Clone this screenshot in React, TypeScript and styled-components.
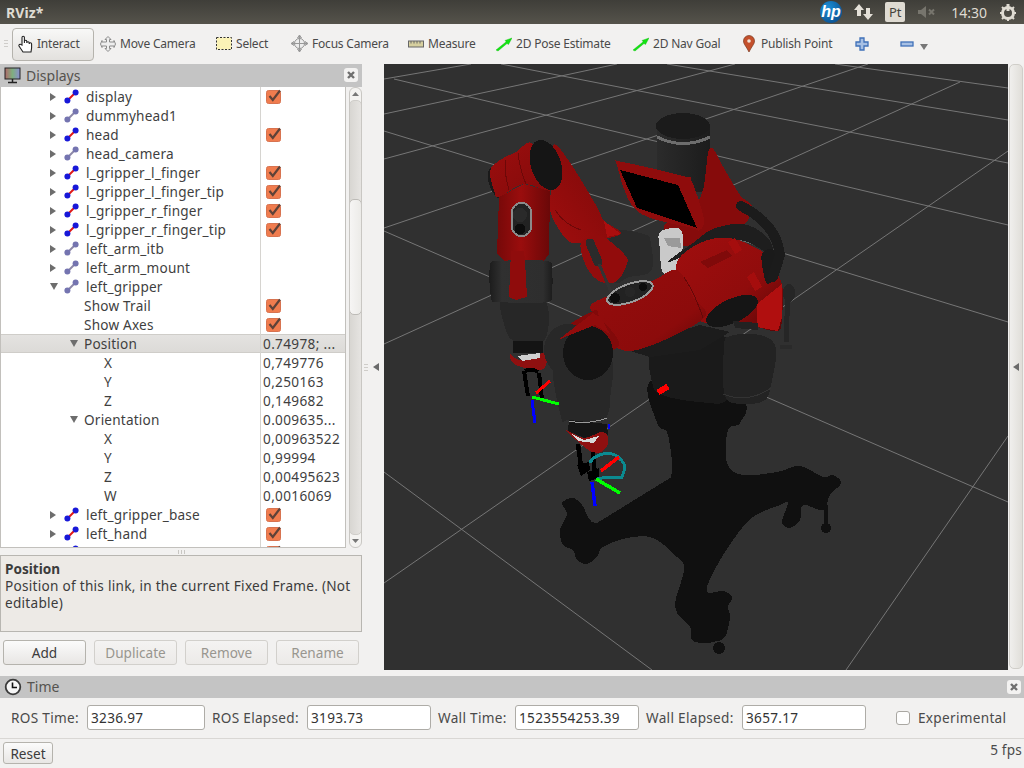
import React from "react";
import styled, { createGlobalStyle } from "styled-components";

const Global = createGlobalStyle`
  html, body { margin: 0; padding: 0; background: #f2f1f0; }
  body { font-family: "Noto Sans", "Open Sans", sans-serif; font-size: 13.5px; color: #3c3c3c; }
`;
const Root = styled.div`
  width: 1024px; height: 768px; overflow: hidden; display: flex; flex-direction: column; background: #f2f1f0;
`;
const TopBar = styled.div`
  height: 24px; flex: none; display: flex; align-items: center; padding: 0 8px 0 6px; box-sizing: border-box;
  background: linear-gradient(#3f3e39, #55534b);
  color: #dfdbd2;
`;
const Title = styled.div`font-weight: 700; font-size: 14px; letter-spacing: .1px; margin-right: auto;`;
const Tray = styled.div`display: flex; align-items: center;`;
const PtBox = styled.div`
  width: 20px; height: 20px; margin: 0 13px 0 12px; background: #dfdbd2; border-radius: 2px; color: #45433d;
  font-size: 13px; text-align: center; line-height: 20px;
`;
const Clock = styled.div`font-size: 14px; margin: 0 13px 0 16px;`;
const Toolbar = styled.div`
  height: 40px; flex: none; display: flex; align-items: center; background: #f2f1f0; padding-left: 4px; box-sizing: border-box;
  font-size: 12px; letter-spacing: -.2px; color: #4a4a4a;
`;
const Grip = styled.div`
  width: 4px; height: 8px; margin-right: 4px;
  background: repeating-linear-gradient(#cfcdca 0 1px, transparent 1px 3px);
`;
const ActiveTool = styled.div`
  width: 82px; height: 33px; box-sizing: border-box; display: flex; align-items: center; gap: 2px; padding-left: 5px; padding-bottom: 1px;
  border: 1px solid #b5b3ad; border-radius: 4px; background: linear-gradient(#f8f8f7, #e3e1de);
`;
const Tool = styled.div<{ $w: number }>`
  width: ${(p) => p.$w}px; flex: none; box-sizing: border-box; padding-left: 6px; padding-bottom: 1px; display: flex; align-items: center; gap: 4px; white-space: nowrap;
`;
const Main = styled.div`height: 612px; flex: none; display: flex;`;
const LeftPanel = styled.div`width: 362px; flex: none; display: flex; flex-direction: column;`;
const DockHeader = styled.div`
  height: 23px; flex: none; background: #c4c4c4; display: flex; align-items: center; gap: 5px; padding: 0 4px 1px; box-sizing: border-box;
  font-size: 14px; color: #55534f;
`;
const CloseBtn = styled.div`
  width: 14px; height: 14px; margin-left: auto; background: #f3f2f1; border-radius: 3px; display: flex; align-items: center; justify-content: center;
`;
const TreeArea = styled.div`height: 461px; flex: none; display: flex;`;
const Tree = styled.div`
  width: 346px; flex: none; box-sizing: border-box; background: #fff; border: 1px solid #c2c0bc; border-top: 0; overflow: hidden;
`;
const Row = styled.div<{ $sel?: boolean }>`
  height: 19px; display: grid; grid-template-columns: 259px 1fr; align-items: stretch; font-size: 13.6px; letter-spacing: .2px; color: #3f3f3f; box-sizing: border-box;
  background: ${(p) => (p.$sel ? "linear-gradient(#e4e3e1,#dcdad7)" : "transparent")};
  ${(p) => (p.$sel ? "box-shadow: inset 0 1px #cfcdc9, inset 0 -1px #cfcdc9;" : "")}
`;
const NameCell = styled.div<{ $indent: number }>`
  display: flex; align-items: center; padding-left: ${(p) => p.$indent}px; white-space: nowrap;
`;
const ValueCell = styled.div`
  border-left: 1px solid #d6d4d0; padding-left: 2px; display: flex; align-items: center; white-space: nowrap; overflow: hidden; letter-spacing: .35px;
`;
const Arrow = styled.span<{ $open?: boolean }>`
  width: 0; height: 0; flex: none; margin-right: ${(p) => (p.$open ? 6 : 8)}px;
  ${(p) =>
    p.$open
      ? "border-left: 4px solid transparent; border-right: 4px solid transparent; border-top: 7px solid #6d6d6d;"
      : "border-top: 4px solid transparent; border-bottom: 4px solid transparent; border-left: 6px solid #6d6d6d;"}
`;
const LinkName = styled.span`margin-left: 7px;`;
const Check = styled.span`
  width: 16px; height: 16px; margin: 0 0 2px 3px; display: flex;
`;
const ScrollCol = styled.div`
  width: 13px; margin-left: 3px; display: flex; flex-direction: column; border: 1px solid #c9c7c3; border-radius: 6px; box-sizing: border-box; background: #f4f3f1; overflow: hidden;
`;
const ScrollEnd = styled.div`height: 12px; flex: none; display: flex; align-items: center; justify-content: center;`;
const Track = styled.div`
  flex: 1; background: linear-gradient(90deg,#d8d6d2,#e6e4e1); border-radius: 5px; border: 1px solid #cfcdc9; margin: 0 -1px; display: flex; flex-direction: column;
`;
const Thumb = styled.div`
  height: 114px; margin-top: 98px; background: linear-gradient(90deg,#f6f5f4,#ecebe8); border: 1px solid #bdbbb7; border-radius: 5px; margin-left: -1px; margin-right: -1px;
`;
const SplitH = styled.div`
  height: 7px; flex: none; display: flex; justify-content: center; align-items: flex-start;
`;
const Dots = styled.div`
  width: 7px; height: 4px; margin-top: 2px; background: repeating-linear-gradient(90deg,#c9c7c3 0 1px,transparent 1px 3px);
`;
const Desc = styled.div`
  height: 77px; flex: none; box-sizing: border-box; background: #edeae6; border: 1px solid #b8b6b1; padding: 4px 4px; font-size: 13.6px; letter-spacing: .27px; line-height: 17px; color: #3c3c3c;
`;
const Strong = styled.div`font-weight: 700; letter-spacing: 0;`;
const BtnRow = styled.div`display: flex; gap: 8px; padding: 8px 3px 0;`;
const Btn = styled.div<{ $off?: boolean; $w?: number }>`
  width: ${(p) => p.$w ?? 83}px; height: ${(p) => (p.$w ? 22 : 25)}px; box-sizing: border-box; border-radius: 3px; display: flex; align-items: center; justify-content: center; font-size: 13.6px;
  border: 1px solid ${(p) => (p.$off ? "#d2d0cc" : "#b5b3ad")};
  color: ${(p) => (p.$off ? "#98968f" : "#3c3c3c")};
  background: ${(p) => (p.$off ? "linear-gradient(#f4f3f2,#eceae8)" : "linear-gradient(#fbfbfb,#e8e6e4)")};
`;
const SplitV = styled.div`
  width: 22px; flex: none; display: flex; align-items: center; justify-content: flex-end; gap: 5px; padding-right: 5px; box-sizing: border-box; height: 606px;
`;
const VDots = styled.div`
  width: 4px; height: 7px; background: repeating-linear-gradient(#cfcdc9 0 1px,transparent 1px 3px);
`;
const TriLeft = styled.div`
  width: 0; height: 0; border-top: 4px solid transparent; border-bottom: 4px solid transparent; border-right: 6px solid #6a6a6a;
`;
const Viewport = styled.div`width: 624px; height: 606px; flex: none; background: #303030; overflow: hidden;`;
const RightBar = styled.div`
  width: 14px; height: 605px; margin-left: 1px; box-sizing: border-box; border: 1px solid #d0cec9; border-radius: 5px; background: linear-gradient(90deg,#f0efed,#e0ded9);
  display: flex; align-items: center; justify-content: center;
`;
const TimeHeader = styled(DockHeader)`height: 22px; padding-right: 3px;`;
const Fields = styled.div`
  height: 41px; flex: none; box-sizing: border-box; border-bottom: 1px solid #d9d7d4; display: flex; align-items: center; padding: 0 0 1px 11px; font-size: 13.6px; letter-spacing: .3px; color: #4a4a4a; white-space: nowrap;
`;
const FieldLabel = styled.div<{ $w: number }>`width: ${(p) => p.$w}px; flex: none;`;
const Input = styled.div<{ $w: number }>`
  width: ${(p) => p.$w}px; height: 25px; flex: none; box-sizing: border-box; background: #fff; border: 1px solid #aeaca7; border-radius: 3px; padding-left: 3px; line-height: 23px; color: #333; margin-right: 7px;
`;
const Box = styled.div`
  width: 14px; height: 14px; flex: none; box-sizing: border-box; border: 1px solid #a9a7a2; border-radius: 3px; background: #fdfdfd; margin: 0 8px 0 23px;
`;
const Status = styled.div`
  flex: 1; display: flex; justify-content: space-between; align-items: flex-start; padding: 3px 2px 0 3px; font-size: 13.6px; color: #4a4a4a;
`;
const Fps = styled.div`margin-top: -2px; letter-spacing: .2px;`;

const Link = ({ off }: { off?: boolean }) => (
  <svg width="15" height="15" viewBox="0 0 15 15" style={{ flex: "none" }}>
    <line x1="3" y1="12" x2="12" y2="3" stroke={off ? "#8d88a8" : "#e01818"} strokeWidth="2" />
    <circle cx="3.4" cy="11.6" r="3" fill={off ? "#7474b0" : "#1818d8"} />
    <circle cx="11.6" cy="3.4" r="3" fill={off ? "#7474b0" : "#1818d8"} />
  </svg>
);
const CheckIcon = () => (
  <svg width="16" height="16" viewBox="0 0 16 16">
    <rect x="0.5" y="2.5" width="14" height="13" rx="2" fill="#f07c4e" stroke="#d77350" />
    <path d="M3.5 8 L6.8 12 L14 2.5" fill="none" stroke="#5e4238" strokeWidth="2.2" />
  </svg>
);
const X = () => (
  <svg width="10" height="10" viewBox="0 0 10 10">
    <path d="M2 2 L8 8 M8 2 L2 8" stroke="#6f6f6f" strokeWidth="2.4" />
  </svg>
);
const PoseArrow = () => (
  <svg width="16" height="16" viewBox="0 0 16 16" style={{ flex: "none" }}>
    <path d="M0 14 L2 15 L11 7.5 L12.5 8.5 L16 2 L9 4.5 L10.2 5.8 Z" fill="#13e313" stroke="#0dbb0d" strokeWidth=".4" />
  </svg>
);

type R = { n: string; kind: "on" | "off" | "prop"; indent?: number; arrow?: "r" | "d"; v?: string; c?: boolean; sel?: boolean };
const rows: R[] = [
  { n: "display", kind: "on", arrow: "r", c: true },
  { n: "dummyhead1", kind: "off", arrow: "r" },
  { n: "head", kind: "on", arrow: "r", c: true },
  { n: "head_camera", kind: "off", arrow: "r" },
  { n: "l_gripper_l_finger", kind: "on", arrow: "r", c: true },
  { n: "l_gripper_l_finger_tip", kind: "on", arrow: "r", c: true },
  { n: "l_gripper_r_finger", kind: "on", arrow: "r", c: true },
  { n: "l_gripper_r_finger_tip", kind: "on", arrow: "r", c: true },
  { n: "left_arm_itb", kind: "off", arrow: "r" },
  { n: "left_arm_mount", kind: "off", arrow: "r" },
  { n: "left_gripper", kind: "off", arrow: "d" },
  { n: "Show Trail", kind: "prop", indent: 83, c: true },
  { n: "Show Axes", kind: "prop", indent: 83, c: true },
  { n: "Position", kind: "prop", indent: 69, arrow: "d", v: "0.74978; ...", sel: true },
  { n: "X", kind: "prop", indent: 103, v: "0,749776" },
  { n: "Y", kind: "prop", indent: 103, v: "0,250163" },
  { n: "Z", kind: "prop", indent: 103, v: "0,149682" },
  { n: "Orientation", kind: "prop", indent: 69, arrow: "d", v: "0.009635..." },
  { n: "X", kind: "prop", indent: 103, v: "0,00963522" },
  { n: "Y", kind: "prop", indent: 103, v: "0,99994" },
  { n: "Z", kind: "prop", indent: 103, v: "0,00495623" },
  { n: "W", kind: "prop", indent: 103, v: "0,0016069" },
  { n: "left_gripper_base", kind: "on", arrow: "r", c: true },
  { n: "left_hand", kind: "on", arrow: "r", c: true },
  { n: "left_hand_accelerometer", kind: "on", arrow: "r", c: true },
];

const GL = ({ p }: { p: number[] }) => <path d={`M${p[0]} ${p[1]} L${p[2]} ${p[3]}`} />;
const gridLines = [
  [384, 79, 471, 64], [384, 114, 617, 64], [384, 159, 735, 64], [384, 228, 868, 64], [384, 344, 960, 82],
  [384, 583, 1008, 151], [846, 670, 1008, 436],
  [835, 64, 1008, 88], [667, 64, 1008, 120], [501, 64, 1008, 163], [394, 79, 1008, 225], [384, 131, 1008, 322],
  [384, 231, 1008, 502], [384, 472, 652, 670],
];

// closed Catmull-Rom curve through the listed points, for the rounded robot parts
const smooth = (s: string) => {
  const p = s.trim().split(/\s+/).map((t) => t.split(",").map(Number));
  const n = p.length;
  let d = `M${p[0][0]} ${p[0][1]}`;
  for (let i = 0; i < n; i++) {
    const a = p[(i - 1 + n) % n], b = p[i], c = p[(i + 1) % n], e = p[(i + 2) % n];
    d += ` C${(b[0] + (c[0] - a[0]) / 6).toFixed(1)} ${(b[1] + (c[1] - a[1]) / 6).toFixed(1)} ${(c[0] - (e[0] - b[0]) / 6).toFixed(1)} ${(c[1] - (e[1] - b[1]) / 6).toFixed(1)} ${c[0]} ${c[1]}`;
  }
  return d + " Z";
};
const Blob = ({ pts, fill }: { pts: string; fill: string }) => <path d={smooth(pts)} fill={fill} />;

const Robot = () => (
  <g shapeRendering="crispEdges">
    {/* pedestal */}
    <Blob fill="#101010" pts="653,380 657,423 668,435 670,480 640,498 597,523 582,505 573,498 562,503 567,514 560,530 563,545 573,550 577,560 587,564 597,557 603,547 627,538 653,538 677,557 684,570 675,607 690,627 692,640 703,643 713,642 725,637 730,617 728,607 732,597 723,591 707,592 713,573 733,540 753,517 780,505 788,503 782,522 790,528 800,520 803,505 823,510 830,495 841,483 833,475 823,477 800,466 777,472 743,475 727,463 728,430 740,423 740,400" />
    <polygon fill="#101010" points="670,478 597,523 640,530 690,500" />
    <circle cx="719" cy="648" r="6" fill="#101010" />
    <circle cx="826" cy="528" r="5" fill="#101010" />
    <line x1="826" y1="505" x2="826" y2="526" stroke="#101010" strokeWidth="4" />
    {/* lower torso */}
    <Blob fill="#1a1a1a" pts="653,350 652,382 662,395 700,402 728,398 735,345 700,335" />
    <Blob fill="#232323" pts="724,348 725,396 745,404 765,400 771,385 776,348 760,335 730,336" />
    <path d="M723 394 Q748 404 771 388" stroke="#333" fill="none" />
    {/* head */}
    <rect x="657" y="126" width="53" height="66" fill="url(#gh)" />
    <ellipse cx="683" cy="126" rx="27" ry="13" fill="#1b1b1b" />
    <path d="M657 137 Q683 150 710 137" stroke="#6d6d6d" strokeWidth="3" fill="none" />
    {/* back right torso */}
    <Blob fill="#860b0b" pts="710,148 725,170 740,195 752,206 748,220 735,232 710,244 680,245 664,226 690,212 703,190" />
    {/* central back and light piece */}
    <Blob fill="#2a2a2a" pts="611,234 644,234 651,244 651,271 629,277 614,281" />
    <Blob fill="#c9c9c9" pts="660,232 680,229 683,247 678,262 677,272 663,273 660,250" />
    <polygon fill="#9a9a9a" points="664,238 680,238 681,248 668,246" />
    <polygon fill="#bdbdbd" points="665,335 687,325 687,347 665,343" />
    {/* left shoulder */}
    <Blob fill="#1a1a1a" pts="490,168 488,180 494,194 500,197 497,175" />
    <Blob fill="url(#rv)" pts="490,171 500,160 516,152 531,143 545,170 550,191 524,184 499,197 494,190" />
    <path d="M505 160 Q505 178 509 190 M518 153 Q520 170 526 184" stroke="#6e0808" fill="none" />
    {/* left forearm */}
    <polygon fill="url(#rh)" points="499,197 497,254 504,261 544,261 549,254 550,191 524,184" />
    {/* drum and wrist */}
    <Blob fill="#272727" pts="501,297 504,324 514,341 544,341 547,304 525,298" />
    <Blob fill="url(#gd)" pts="490,266 491,297 499,302 547,302 552,291 552,271 547,261 499,261" />
    <polygon fill="#8f0c0c" points="511,251 509,297 516,300 527,297 525,261 524,251" />
    <rect x="512" y="203" width="19" height="33" rx="9" fill="#222" stroke="#8b8b8b" strokeWidth="2" />
    <circle cx="520" cy="215" r="7" fill="#2a2a2a" />
    <circle cx="520" cy="229" r="5.5" fill="#0c0c0c" />
    {/* upper arm */}
    <Blob fill="url(#rd)" pts="551,191 556,170 554,144 571,164 597,207 604,221 621,233 600,240 581,243 567,240 551,214" />
    <ellipse cx="546" cy="165" rx="15" ry="26" transform="rotate(-18 546 165)" fill="#151515" />
    <path d="M555 210 Q565 225 581 230" stroke="#6e0808" fill="none" />
    {/* elbow */}
    <Blob fill="#920c0c" pts="581,243 601,236 624,254 627,264 617,281 601,282 587,268" />
    <polygon fill="#ab0e0e" points="604,221 621,234 607,237" />
    {/* handle */}
    <line x1="590" y1="243" x2="598" y2="262" stroke="#2b2b2b" strokeWidth="9" strokeLinecap="round" />
    <line x1="599" y1="264" x2="612" y2="294" stroke="#333" strokeWidth="3" />
    {/* tablet */}
    <Blob fill="#8f0c0c" pts="617,165 622,162 683,176 692,182 704,220 698,231 692,228 637,211" />
    <polygon fill="#000" points="620,170 678,185 697,228 637,208" />
    {/* arm top dark */}
    <Blob fill="#1e1e1e" pts="668,262 693,243 713,229 743,224 767,237 772,255 740,240 700,250" />
    {/* right shoulder */}
    <Blob fill="url(#rd2)" pts="677,262 700,243 730,238 763,252 772,267 782,284 782,317 778,331 757,327 733,321 700,321 682,290" />
    <polygon fill="#b00f0f" points="757,304 782,284 782,317 778,331 757,327" />
    <polygon fill="#800a0a" points="700,262 727,250 732,256 708,268" />
    <polygon fill="#a50d0d" points="728,242 735,238 742,250 735,254" />
    <polygon fill="#a50d0d" points="747,277 754,272 762,287 755,291" />
    <Blob fill="#1a1a1a" pts="762,254 772,249 782,261 778,274 768,284 763,271" />
    <ellipse cx="732" cy="311" rx="28" ry="12" transform="rotate(-25 732 311)" fill="#151515" />
    <polygon fill="#222" points="733,321 758,323 758,330 735,328" />
    <path d="M741 206 C757 214 777 228 780 255 L773 277" stroke="#1b1b1b" strokeWidth="10" fill="none" strokeLinecap="round" />
    <line x1="788" y1="290" x2="786" y2="342" stroke="#262626" strokeWidth="5" />
    <ellipse cx="789" cy="293" rx="6" ry="9" fill="#262626" />
    <rect x="780" y="345" width="12" height="4" fill="#2a2a2a" />
    {/* front forearm */}
    <polygon fill="#1c1c1c" points="610,345 650,357 700,350 730,332 700,325 650,340" />
    <Blob fill="url(#rf)" pts="593,303 650,282 677,270 693,297 704,318 647,347 617,348 600,320" />
    <path d="M684 277 Q696 296 703 318" stroke="#650808" fill="none" />
    <Blob fill="#820a0a" pts="593,311 556,336 563,360 618,347 600,318" />
    <ellipse cx="630" cy="293" rx="24" ry="9" transform="rotate(-20 630 293)" fill="#222" stroke="#9a9a9a" strokeWidth="2" />
    <circle cx="615" cy="298" r="5" fill="#0d0d0d" />
    <circle cx="630" cy="292" r="5" fill="#262626" />
    <circle cx="643" cy="287" r="4" fill="#0d0d0d" />
    {/* left gripper wrist */}
    <rect x="513" y="341" width="30" height="12" fill="#141414" />
    <Blob fill="#8f1010" pts="510,354 513,363 525,368 540,370 546,365 547,352 540,354 520,360" />
    <polygon fill="#cfcfcf" points="517,356 540,353 540,358 522,361" />
    {/* elbow drum + lower arm */}
    <Blob fill="#282828" pts="554,360 561,417 569,420 604,420 611,390 612,360 590,350" />
    <ellipse cx="568" cy="350" rx="24" ry="26" fill="#282828" />
    <ellipse cx="588" cy="353" rx="25" ry="27" fill="#141414" />
    <polygon fill="#920c0c" points="558,340 593,313 601,318 610,334 595,325 570,335" />
    <polygon fill="#151515" points="569,420 607,424 608,435 600,434 584,438 568,431" />
    <path d="M569 421 Q588 425 607 418" stroke="#9a9a9a" fill="none" />
    <Blob fill="#8f1010" pts="566,430 576,440 594,453 606,448 608,437 601,432 584,438" />
    <polygon fill="#d8d8d8" points="572,434 584,440 599,436 594,443 578,441" />
    {/* gripper fingers */}
    <path d="M524 371 L528 396 M539 373 L542 399 M525 371 Q532 368 538 372" stroke="#000" strokeWidth="4" fill="none" />
    <line x1="578" y1="444" x2="582" y2="474" stroke="#000" strokeWidth="4.5" />
    <line x1="593" y1="452" x2="595" y2="478" stroke="#000" strokeWidth="4.5" />
    <polygon fill="#000" points="577,465 589,462 590,470 581,476" />
    <polygon fill="#000" points="587,472 599,468 599,478 589,481" />
    {/* left axes */}
    <line x1="536" y1="393" x2="550" y2="381" stroke="#f00" strokeWidth="3" />
    <line x1="532" y1="397" x2="559" y2="404" stroke="#0f0" strokeWidth="3" />
    <line x1="532" y1="400" x2="535" y2="423" stroke="#00f" strokeWidth="3" />
    {/* trail */}
    <path d="M590 463 Q592 456 607 453 Q616 454 619 458 Q625 463 625 468 L622 477 L607 477 L597 479" fill="none" stroke="#0b8a90" strokeWidth="3" />
    {/* right axes */}
    <line x1="601" y1="471" x2="619" y2="457" stroke="#f00" strokeWidth="3.5" />
    <line x1="596" y1="479" x2="620" y2="493" stroke="#0f0" strokeWidth="3.5" />
    <line x1="592" y1="482" x2="595" y2="506" stroke="#00f" strokeWidth="3.5" />
    <line x1="658" y1="392.5" x2="668" y2="386.5" stroke="#f00" strokeWidth="6" />
    <line x1="609" y1="424" x2="609" y2="429" stroke="#00f" strokeWidth="1.5" />
  </g>
);

export default function App() {
  return (
    <Root>
      <Global />
      <TopBar>
        <Title>RViz*</Title>
        <Tray>
          <svg width="24" height="24" viewBox="0 0 24 24" style={{ marginRight: 11 }}>
            <defs>
              <radialGradient id="hpb" cx=".35" cy=".3" r=".8">
                <stop offset="0" stopColor="#1c8fd6" />
                <stop offset="1" stopColor="#0a4f8f" />
              </radialGradient>
            </defs>
            <circle cx="12" cy="12" r="11" fill="url(#hpb)" />
            <text x="12" y="17" fontFamily="Liberation Sans" fontSize="16" fontStyle="italic" fontWeight="700" fill="#fff" textAnchor="middle">hp</text>
          </svg>
          <svg width="19" height="18" viewBox="0 0 19 18">
            <path d="M5 1 L10 7 H7 V13 H3 V7 H0 Z M14 17 L9 11 H12 V5 H16 V11 H19 Z" fill="#e4e0d8" />
          </svg>
          <PtBox>Pt</PtBox>
          <svg width="17" height="14" viewBox="0 0 17 14">
            <path d="M0 5 H3 L8 1 V13 L3 9 H0 Z" fill="#77756d" />
            <path d="M11 4.5 L16 9.5 M16 4.5 L11 9.5" stroke="#77756d" strokeWidth="2" />
          </svg>
          <Clock>14:30</Clock>
          <svg width="16" height="18" viewBox="0 0 16 18">
            <path d="M8 1 V8" stroke="#dfdbd2" strokeWidth="3" />
            <circle cx="8" cy="10" r="5.5" fill="none" stroke="#dfdbd2" strokeWidth="3" />
            <path d="M0 10 H2 M14 10 H16 M2 4 L3.5 5.5 M14 4 L12.5 5.5 M2 16 L3.5 14.5 M14 16 L12.5 14.5 M8 16 V18" stroke="#dfdbd2" strokeWidth="2" />
          </svg>
        </Tray>
      </TopBar>

      <Toolbar>
        <Grip />
        <ActiveTool>
          <svg width="17" height="18" viewBox="0 0 17 18" style={{ flex: "none" }}>
            <path d="M4 10 V2.5 a1.2 1.2 0 0 1 2.4 0 V8 V6.5 a1.2 1.2 0 0 1 2.4 0 V8 a1.2 1.2 0 0 1 2.4 0 V9 a1.2 1.2 0 0 1 2.4 0 V13 L13 17 H5 L1 11 a1.3 1.3 0 0 1 2-1.5 Z" fill="#fff" stroke="#222" strokeWidth="1.1" />
          </svg>
          Interact
        </ActiveTool>
        <Tool $w={116}>
          <svg width="16" height="16" viewBox="0 0 16 16" style={{ flex: "none" }}>
            <path d="M8 .5 L11 3.5 H9.5 V6 H14 V4.5 L15.5 8 L14 11.5 V10 H9.5 V12.5 H11 L8 15.5 L5 12.5 H6.5 V10 H2 V11.5 L.5 8 L2 4.5 V6 H6.5 V3.5 H5 Z" fill="#eee" stroke="#8a8a8a" />
          </svg>
          Move Camera
        </Tool>
        <Tool $w={75}>
          <svg width="16" height="16" viewBox="0 0 16 16" style={{ flex: "none" }}>
            <rect x=".5" y="1.5" width="15" height="12" fill="#fbf3b6" stroke="#333" strokeDasharray="2 1.5" />
          </svg>
          Select
        </Tool>
        <Tool $w={117}>
          <svg width="17" height="17" viewBox="0 0 17 17" style={{ flex: "none" }}>
            <circle cx="8.5" cy="8.5" r="5" fill="#ececec" stroke="#999" />
            <path d="M8.5 0 V17 M0 8.5 H17 M8.5 0 L6.5 3 H10.5 Z M8.5 17 L6.5 14 H10.5 Z M0 8.5 L3 6.5 V10.5 Z M17 8.5 L14 6.5 V10.5 Z" stroke="#999" fill="#e4e4e4" />
          </svg>
          Focus Camera
        </Tool>
        <Tool $w={88}>
          <svg width="16" height="16" viewBox="0 0 16 16" style={{ flex: "none" }}>
            <rect x=".5" y="5" width="15" height="6" fill="#d6cf9f" stroke="#666" />
            <path d="M3 5 V7.5 M6 5 V7.5 M9 5 V7.5 M12 5 V7.5" stroke="#666" />
          </svg>
          Measure
        </Tool>
        <Tool $w={137}>
          <PoseArrow />
          2D Pose Estimate
        </Tool>
        <Tool $w={108}>
          <PoseArrow />
          2D Nav Goal
        </Tool>
        <Tool $w={114}>
          <svg width="16" height="18" viewBox="0 0 16 18" style={{ flex: "none" }}>
            <path d="M8 17 C5 11 2.5 9 2.5 6 a5.5 5.5 0 0 1 11 0 C13.5 9 11 11 8 17 Z" fill="#c4502c" stroke="#7a3a20" strokeWidth=".7" />
            <circle cx="8" cy="6" r="1.8" fill="#f2e4d8" />
          </svg>
          Publish Point
        </Tool>
        <Tool $w={45}>
          <svg width="14" height="14" viewBox="0 0 14 14">
            <path d="M5 1 H9 V5 H13 V9 H9 V13 H5 V9 H1 V5 H5 Z" fill="#a7c0e4" stroke="#3f70b8" strokeWidth="1.3" />
          </svg>
        </Tool>
        <Tool $w={40}>
          <svg width="14" height="14" viewBox="0 0 14 14" style={{ flex: "none" }}>
            <rect x="1" y="5" width="12" height="4" fill="#a7c0e4" stroke="#3f70b8" strokeWidth="1.3" />
          </svg>
          <svg width="8" height="6" viewBox="0 0 8 6" style={{ marginLeft: 2, marginTop: 6, flex: "none" }}>
            <path d="M0 0 H8 L4 6 Z" fill="#777" />
          </svg>
        </Tool>
      </Toolbar>

      <Main>
        <LeftPanel>
          <DockHeader>
            <svg width="17" height="17" viewBox="0 0 17 17" style={{ flex: "none" }}>
              <defs>
                <linearGradient id="scr" x1="0" x2="1" y1="0" y2="0">
                  <stop offset="0" stopColor="#b06a6a" />
                  <stop offset=".5" stopColor="#7fae7f" />
                  <stop offset="1" stopColor="#8a8ed0" />
                </linearGradient>
              </defs>
              <rect x="1" y="1" width="15" height="11" fill="url(#scr)" stroke="#222" />
              <path d="M8.5 12 V15 M4 15.5 H13" stroke="#222" strokeWidth="1.5" />
            </svg>
            Displays
            <CloseBtn><X /></CloseBtn>
          </DockHeader>
          <TreeArea>
            <Tree>
              {rows.map((r, i) => (
                <Row key={i} $sel={r.sel}>
                  <NameCell $indent={r.kind === "prop" ? (r.indent as number) : 49}>
                    {r.kind === "prop" ? (
                      <>
                        {r.arrow === "d" && <Arrow $open />}
                        {r.n}
                      </>
                    ) : (
                      <>
                        <Arrow $open={r.arrow === "d"} />
                        <Link off={r.kind === "off"} />
                        <LinkName>{r.n}</LinkName>
                      </>
                    )}
                  </NameCell>
                  <ValueCell>
                    {r.c ? <Check><CheckIcon /></Check> : r.v}
                  </ValueCell>
                </Row>
              ))}
            </Tree>
            <ScrollCol>
              <ScrollEnd>
                <svg width="7" height="4" viewBox="0 0 7 4"><path d="M0 4 L3.5 0 L7 4 Z" fill="#777" /></svg>
              </ScrollEnd>
              <Track><Thumb /></Track>
              <ScrollEnd>
                <svg width="7" height="4" viewBox="0 0 7 4"><path d="M0 0 L3.5 4 L7 0 Z" fill="#777" /></svg>
              </ScrollEnd>
            </ScrollCol>
          </TreeArea>
          <SplitH><Dots /></SplitH>
          <Desc>
            <Strong>Position</Strong>
            Position of this link, in the current Fixed Frame. (Not editable)
          </Desc>
          <BtnRow>
            <Btn>Add</Btn>
            <Btn $off>Duplicate</Btn>
            <Btn $off>Remove</Btn>
            <Btn $off>Rename</Btn>
          </BtnRow>
        </LeftPanel>
        <SplitV><VDots /><TriLeft /></SplitV>
        <Viewport>
          <svg width="624" height="606" viewBox="384 64 624 606" style={{ display: "block" }}>
            <defs>
              <linearGradient id="gh" x1="0" x2="1" y1="0" y2="0">
                <stop offset="0" stopColor="#2b2b2b" />
                <stop offset="1" stopColor="#1c1c1c" />
              </linearGradient>
              <linearGradient id="gd" x1="0" x2="1" y1="0" y2="0">
                <stop offset="0" stopColor="#1c1c1c" />
                <stop offset=".2" stopColor="#303030" />
                <stop offset=".85" stopColor="#2e2e2e" />
                <stop offset="1" stopColor="#1c1c1c" />
              </linearGradient>
              <linearGradient id="rh" x1="0" x2="1" y1="0" y2="0">
                <stop offset="0" stopColor="#760909" />
                <stop offset=".45" stopColor="#9a0d0d" />
                <stop offset="1" stopColor="#6a0808" />
              </linearGradient>
              <linearGradient id="rv" x1="0" x2="1" y1="0" y2="1">
                <stop offset="0" stopColor="#9c0e0e" />
                <stop offset="1" stopColor="#820a0a" />
              </linearGradient>
              <linearGradient id="rd" x1="0" x2="1" y1="1" y2="0">
                <stop offset="0" stopColor="#a00e0e" />
                <stop offset=".55" stopColor="#8a0b0b" />
                <stop offset="1" stopColor="#6c0808" />
              </linearGradient>
              <linearGradient id="rd2" x1="0" x2="1" y1="0" y2="1">
                <stop offset="0" stopColor="#a00e0e" />
                <stop offset=".6" stopColor="#900c0c" />
                <stop offset="1" stopColor="#580606" />
              </linearGradient>
              <linearGradient id="rf" x1="0" x2="1" y1="0" y2="1">
                <stop offset="0" stopColor="#960d0d" />
                <stop offset=".7" stopColor="#8c0b0b" />
                <stop offset="1" stopColor="#620707" />
              </linearGradient>
            </defs>
            <g stroke="#767676" strokeWidth="1" fill="none">
              {gridLines.map((p, i) => <GL key={i} p={p} />)}
            </g>
            <Robot />
          </svg>
        </Viewport>
        <RightBar><TriLeft /></RightBar>
      </Main>

      <TimeHeader>
        <svg width="18" height="18" viewBox="0 0 18 18" style={{ flex: "none" }}>
          <circle cx="9" cy="9" r="7.3" fill="#f6f6f6" stroke="#3a3a3a" strokeWidth="1.8" />
          <path d="M8.5 4.5 V9.5 H13" fill="none" stroke="#111" strokeWidth="1.6" />
        </svg>
        Time
        <CloseBtn><X /></CloseBtn>
      </TimeHeader>
      <Fields>
        <FieldLabel $w={76}>ROS Time:</FieldLabel>
        <Input $w={118}>3236.97</Input>
        <FieldLabel $w={95}>ROS Elapsed:</FieldLabel>
        <Input $w={124}>3193.73</Input>
        <FieldLabel $w={77}>Wall Time:</FieldLabel>
        <Input $w={124}>1523554253.39</Input>
        <FieldLabel $w={96}>Wall Elapsed:</FieldLabel>
        <Input $w={124}>3657.17</Input>
        <Box />
        Experimental
      </Fields>
      <Status>
        <Btn $w={50}>Reset</Btn>
        <Fps>5 fps</Fps>
      </Status>
    </Root>
  );
}
